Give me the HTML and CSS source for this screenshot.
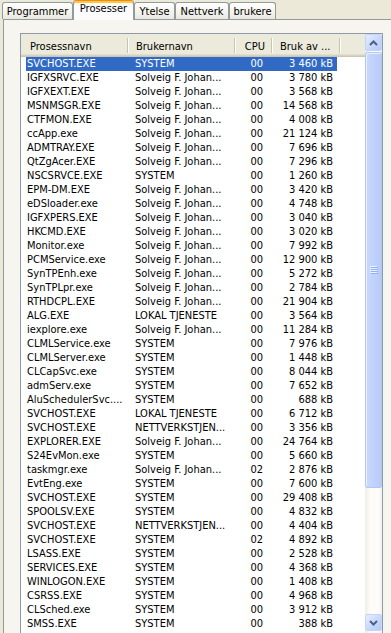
FILE: index.html
```html
<!DOCTYPE html>
<html lang="no">
<head>
<meta charset="utf-8">
<title>Oppgavebehandling</title>
<link rel="stylesheet" href="styles.css">
</head>
<body>
<div class="tabs">
  <div class="tab w1">Programmer</div>
  <div class="tab active w2">Prosesser</div>
  <div class="tab w3">Ytelse</div>
  <div class="tab w4">Nettverk</div>
  <div class="tab w5">brukere</div>
</div>
<div class="panel">
  <div class="list">
    <div class="content">
      <div class="header">
        <div class="hcol h1">Prosessnavn</div>
        <div class="hcol h2">Brukernavn</div>
        <div class="hcol h3">CPU</div>
        <div class="hcol h4">Bruk av ...</div>
        <div class="hcol hfill"></div>
      </div>
      <div class="rows">
        <div class="row sel"><span class="c1">SVCHOST.EXE</span><span class="c2">SYSTEM</span><span class="c3">00</span><span class="c4">3 460 kB</span></div>
        <div class="row"><span class="c1">IGFXSRVC.EXE</span><span class="c2">Solveig F. Johan...</span><span class="c3">00</span><span class="c4">3 780 kB</span></div>
        <div class="row"><span class="c1">IGFXEXT.EXE</span><span class="c2">Solveig F. Johan...</span><span class="c3">00</span><span class="c4">3 568 kB</span></div>
        <div class="row"><span class="c1">MSNMSGR.EXE</span><span class="c2">Solveig F. Johan...</span><span class="c3">00</span><span class="c4">14 568 kB</span></div>
        <div class="row"><span class="c1">CTFMON.EXE</span><span class="c2">Solveig F. Johan...</span><span class="c3">00</span><span class="c4">4 008 kB</span></div>
        <div class="row"><span class="c1">ccApp.exe</span><span class="c2">Solveig F. Johan...</span><span class="c3">00</span><span class="c4">21 124 kB</span></div>
        <div class="row"><span class="c1">ADMTRAY.EXE</span><span class="c2">Solveig F. Johan...</span><span class="c3">00</span><span class="c4">7 696 kB</span></div>
        <div class="row"><span class="c1">QtZgAcer.EXE</span><span class="c2">Solveig F. Johan...</span><span class="c3">00</span><span class="c4">7 296 kB</span></div>
        <div class="row"><span class="c1">NSCSRVCE.EXE</span><span class="c2">SYSTEM</span><span class="c3">00</span><span class="c4">1 260 kB</span></div>
        <div class="row"><span class="c1">EPM-DM.EXE</span><span class="c2">Solveig F. Johan...</span><span class="c3">00</span><span class="c4">3 420 kB</span></div>
        <div class="row"><span class="c1">eDSloader.exe</span><span class="c2">Solveig F. Johan...</span><span class="c3">00</span><span class="c4">4 748 kB</span></div>
        <div class="row"><span class="c1">IGFXPERS.EXE</span><span class="c2">Solveig F. Johan...</span><span class="c3">00</span><span class="c4">3 040 kB</span></div>
        <div class="row"><span class="c1">HKCMD.EXE</span><span class="c2">Solveig F. Johan...</span><span class="c3">00</span><span class="c4">3 020 kB</span></div>
        <div class="row"><span class="c1">Monitor.exe</span><span class="c2">Solveig F. Johan...</span><span class="c3">00</span><span class="c4">7 992 kB</span></div>
        <div class="row"><span class="c1">PCMService.exe</span><span class="c2">Solveig F. Johan...</span><span class="c3">00</span><span class="c4">12 900 kB</span></div>
        <div class="row"><span class="c1">SynTPEnh.exe</span><span class="c2">Solveig F. Johan...</span><span class="c3">00</span><span class="c4">5 272 kB</span></div>
        <div class="row"><span class="c1">SynTPLpr.exe</span><span class="c2">Solveig F. Johan...</span><span class="c3">00</span><span class="c4">2 784 kB</span></div>
        <div class="row"><span class="c1">RTHDCPL.EXE</span><span class="c2">Solveig F. Johan...</span><span class="c3">00</span><span class="c4">21 904 kB</span></div>
        <div class="row"><span class="c1">ALG.EXE</span><span class="c2">LOKAL TJENESTE</span><span class="c3">00</span><span class="c4">3 564 kB</span></div>
        <div class="row"><span class="c1">iexplore.exe</span><span class="c2">Solveig F. Johan...</span><span class="c3">00</span><span class="c4">11 284 kB</span></div>
        <div class="row"><span class="c1">CLMLService.exe</span><span class="c2">SYSTEM</span><span class="c3">00</span><span class="c4">7 976 kB</span></div>
        <div class="row"><span class="c1">CLMLServer.exe</span><span class="c2">SYSTEM</span><span class="c3">00</span><span class="c4">1 448 kB</span></div>
        <div class="row"><span class="c1">CLCapSvc.exe</span><span class="c2">SYSTEM</span><span class="c3">00</span><span class="c4">8 044 kB</span></div>
        <div class="row"><span class="c1">admServ.exe</span><span class="c2">SYSTEM</span><span class="c3">00</span><span class="c4">7 652 kB</span></div>
        <div class="row"><span class="c1">AluSchedulerSvc....</span><span class="c2">SYSTEM</span><span class="c3">00</span><span class="c4">688 kB</span></div>
        <div class="row"><span class="c1">SVCHOST.EXE</span><span class="c2">LOKAL TJENESTE</span><span class="c3">00</span><span class="c4">6 712 kB</span></div>
        <div class="row"><span class="c1">SVCHOST.EXE</span><span class="c2">NETTVERKSTJEN...</span><span class="c3">00</span><span class="c4">3 356 kB</span></div>
        <div class="row"><span class="c1">EXPLORER.EXE</span><span class="c2">Solveig F. Johan...</span><span class="c3">00</span><span class="c4">24 764 kB</span></div>
        <div class="row"><span class="c1">S24EvMon.exe</span><span class="c2">SYSTEM</span><span class="c3">00</span><span class="c4">5 660 kB</span></div>
        <div class="row"><span class="c1">taskmgr.exe</span><span class="c2">Solveig F. Johan...</span><span class="c3">02</span><span class="c4">2 876 kB</span></div>
        <div class="row"><span class="c1">EvtEng.exe</span><span class="c2">SYSTEM</span><span class="c3">00</span><span class="c4">7 600 kB</span></div>
        <div class="row"><span class="c1">SVCHOST.EXE</span><span class="c2">SYSTEM</span><span class="c3">00</span><span class="c4">29 408 kB</span></div>
        <div class="row"><span class="c1">SPOOLSV.EXE</span><span class="c2">SYSTEM</span><span class="c3">00</span><span class="c4">4 832 kB</span></div>
        <div class="row"><span class="c1">SVCHOST.EXE</span><span class="c2">NETTVERKSTJEN...</span><span class="c3">00</span><span class="c4">4 404 kB</span></div>
        <div class="row"><span class="c1">SVCHOST.EXE</span><span class="c2">SYSTEM</span><span class="c3">02</span><span class="c4">4 892 kB</span></div>
        <div class="row"><span class="c1">LSASS.EXE</span><span class="c2">SYSTEM</span><span class="c3">00</span><span class="c4">2 528 kB</span></div>
        <div class="row"><span class="c1">SERVICES.EXE</span><span class="c2">SYSTEM</span><span class="c3">00</span><span class="c4">4 368 kB</span></div>
        <div class="row"><span class="c1">WINLOGON.EXE</span><span class="c2">SYSTEM</span><span class="c3">00</span><span class="c4">1 408 kB</span></div>
        <div class="row"><span class="c1">CSRSS.EXE</span><span class="c2">SYSTEM</span><span class="c3">00</span><span class="c4">4 968 kB</span></div>
        <div class="row"><span class="c1">CLSched.exe</span><span class="c2">SYSTEM</span><span class="c3">00</span><span class="c4">3 912 kB</span></div>
        <div class="row"><span class="c1">SMSS.EXE</span><span class="c2">SYSTEM</span><span class="c3">00</span><span class="c4">388 kB</span></div>
      </div>
    </div>
    <div class="sb">
      <div class="sb-btn">
        <svg width="9" height="6" viewBox="0 0 9 6"><path d="M1 5 L4.5 1.5 L8 5" fill="none" stroke="#4D6185" stroke-width="2"/></svg>
      </div>
      <div class="sb-track">
        <div class="sb-thumb">
          <svg width="8" height="8" viewBox="0 0 8 8">
            <rect x="0" y="0" width="7" height="1" fill="#EEF4FE"/><rect x="1" y="1" width="7" height="1" fill="#8CB0F8"/>
            <rect x="0" y="2" width="7" height="1" fill="#EEF4FE"/><rect x="1" y="3" width="7" height="1" fill="#8CB0F8"/>
            <rect x="0" y="4" width="7" height="1" fill="#EEF4FE"/><rect x="1" y="5" width="7" height="1" fill="#8CB0F8"/>
            <rect x="0" y="6" width="7" height="1" fill="#EEF4FE"/><rect x="1" y="7" width="7" height="1" fill="#8CB0F8"/>
          </svg>
        </div>
      </div>
      <div class="sb-btn">
        <svg width="9" height="6" viewBox="0 0 9 6"><path d="M1 1 L4.5 4.5 L8 1" fill="none" stroke="#4D6185" stroke-width="2"/></svg>
      </div>
    </div>
  </div>
</div>
</body>
</html>
```
FILE: styles.css
```css
html, body {
  margin: 0;
  height: 100%;
  overflow: hidden;
}
body {
  background: #ECE9D8;
  font-family: "DejaVu Sans Condensed", "DejaVu Sans", sans-serif;
  font-stretch: condensed;
  font-size: 11px;
  color: #000;
}

/* Tabs */
.tabs {
  display: flex;
  align-items: flex-end;
  height: 19px;
  padding-left: 2px;
}
.tab {
  height: 17px;
  box-sizing: border-box;
  border: 1px solid #919B9C;
  border-bottom: none;
  border-radius: 3px 3px 0 0;
  background: linear-gradient(#FFFFFF, #F3F2EC 60%, #E9E8E1);
  text-align: center;
  line-height: 17px;
  white-space: nowrap;
}
.tab.active {
  height: 20px;
  margin-bottom: -1px;
  position: relative;
  z-index: 1;
  border-top: 1px solid #E68B2C;
  box-shadow: inset 0 2px 0 #FFC73C;
  background: #FCFCFE;
  line-height: 15px;
}
.w1 { width: 71px; }
.w2 { width: 61px; }
.w3 { width: 41px; }
.w4 { width: 54px; }
.w5 { width: 47px; }

/* Panel */
.panel {
  margin-left: 3px;
  border-top: 1px solid #919B9C;
  border-left: 1px solid #919B9C;
  background: #F6F5EF;
  padding: 13px 0 0 16px;
  height: 600px;
}

/* List view */
.list {
  width: 363px;
  height: 600px;
  box-sizing: border-box;
  border: 1px solid #8E9AA6;
  border-bottom: none;
  background: #FFFFFF;
  display: flex;
  overflow: hidden;
}
.content {
  width: 344px;
  display: flex;
  flex-direction: column;
}
.header {
  display: flex;
  height: 23px;
  flex: none;
  background: linear-gradient(to bottom, #EBEADB 0, #EBEADB 20px, #E2DECD 20px, #E2DECD 21px, #D6D2C2 21px, #D6D2C2 22px, #CBC7B8 22px);
}
.hcol {
  position: relative;
  box-sizing: border-box;
  height: 23px;
  line-height: 25px;
  white-space: nowrap;
}
.hcol::after {
  content: "";
  position: absolute;
  right: 0;
  top: 4px;
  width: 1px;
  height: 15px;
  background: #C7C5B2;
  box-shadow: 1px 0 0 #FFFFFF;
}
.hfill::after { display: none; }
.h1 { width: 107px; padding-left: 9px; }
.h2 { width: 107px; padding-left: 8px; }
.h3 { width: 37px; text-align: right; padding-right: 7px; }
.h4 { width: 68px; padding-left: 8px; }
.hfill { flex: 1; }

.rows {
  display: flex;
  flex-direction: column;
}
.row {
  display: flex;
  height: 14px;
  line-height: 14px;
  margin-left: 5px;
  width: 311px;
  white-space: nowrap;
}
.row.sel {
  background: #316AC5;
  color: #FFFFFF;
}
.c1 { width: 102px; padding-left: 1px; box-sizing: border-box; overflow: hidden; }
.c2 { width: 107px; padding-left: 7px; box-sizing: border-box; overflow: hidden; }
.c3 { width: 37px; padding-right: 9px; box-sizing: border-box; text-align: right; }
.c4 { width: 65px; padding-right: 4px; box-sizing: border-box; text-align: right; }

/* Scrollbar */
.sb {
  width: 17px;
  display: flex;
  flex-direction: column;
  padding-bottom: 2px;
  background: linear-gradient(to right, #EEEDE5, #FDFCF8 30%, #FDFCF8 80%, #F3F1EA);
}
.sb-btn {
  height: 17px;
  flex: none;
  box-sizing: border-box;
  border: 1px solid #C3D3FD;
  border-radius: 2px;
  background: linear-gradient(135deg, #E6EEFF, #C6D6FC 60%, #B7CBF9);
  display: flex;
  align-items: center;
  justify-content: center;
}
.sb-track {
  flex: 1;
  padding-top: 1px;
}
.sb-thumb {
  height: 436px;
  box-sizing: border-box;
  border: 1px solid #B3C7F5;
  border-radius: 2px;
  background: linear-gradient(to right, #CAD9FC, #C1D2FB 50%, #B8CBF8);
  box-shadow: inset 1px 1px 0 #E8EFFF;
  display: flex;
  align-items: center;
  justify-content: center;
}
```
